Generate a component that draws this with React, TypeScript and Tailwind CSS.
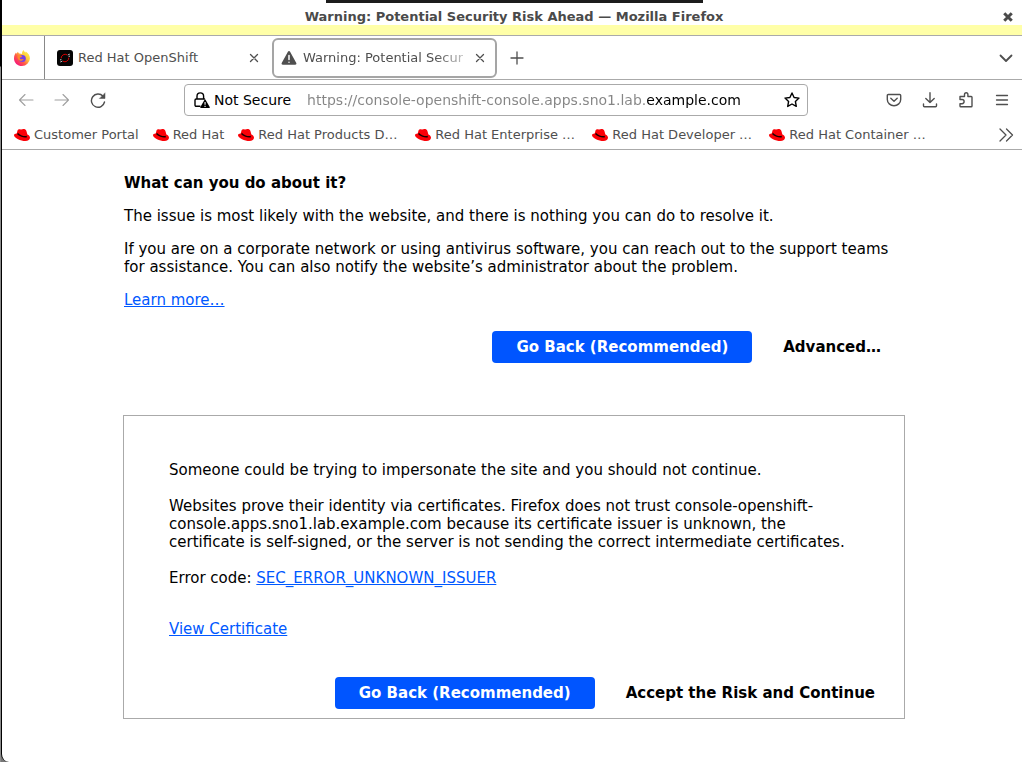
import React from "react";

const bookmarks = [
  { name: "Customer Portal", long: false },
  { name: "Red Hat", long: false },
  { name: "Red Hat Products D…", long: true },
  { name: "Red Hat Enterprise …", long: true },
  { name: "Red Hat Developer …", long: true },
  { name: "Red Hat Container …", long: true },
];

function Icon({ children, className = "size-4" }: { children: React.ReactNode; className?: string }) {
  return (
    <svg viewBox="0 0 16 16" className={className} fill="none" stroke="currentColor" strokeWidth="1.3" strokeLinecap="round" strokeLinejoin="round" aria-hidden="true">
      {children}
    </svg>
  );
}

function CloseIcon() {
  return (
    <Icon className="size-4">
      <path d="M4.500 4.500l7 7M11.500 4.500l-7 7" />
    </Icon>
  );
}

function RedHatIcon() {
  return (
    <svg viewBox="0 0 16 12" className="h-3 w-4 shrink-0" aria-hidden="true">
      <path fill="#fb0007" d="M3.600 1.300C4 .3 4.800 0 5.800.2L7 .6 8.500.2c1.700-.4 3.400.3 3.900 1.700l1 3.500c1.500.7 2.600 1.800 2.600 3.200 0 2-1.800 3.400-4.700 3.400C7 12 0 9 0 6.200 0 5 1 4.500 2.700 4.400z" />
      <path fill="none" stroke="#1a0000" strokeWidth="1.400" d="M3.500 4.500c1.600 2 6.200 3.900 9.300 3" />
    </svg>
  );
}

function FirefoxIcon() {
  return (
    <svg viewBox="0 0 16 16" className="size-4" aria-hidden="true">
      <defs>
        <linearGradient id="flame" x1="0.9" y1="0.1" x2="0.15" y2="0.9">
          <stop offset="0" stopColor="#fff44f" />
          <stop offset="0.35" stopColor="#ffc83a" />
          <stop offset="0.65" stopColor="#ff5a46" />
          <stop offset="1" stopColor="#f5157c" />
        </linearGradient>
      </defs>
      <path fill="url(#flame)" d="M9.500 0c.4 1.300 1.200 1.900 2.100 2.600l.2-1.100c2.500 1.700 4.200 4.200 4.100 7A8 8 0 0 1 8 16C3.500 16 0 12.700 0 8.400 0 6 .9 4 2 2.600l.3 1.200L4 1.800c.1.800.5 1.400 1.100 1.800 1.200.1 2.200.1 3 .7C7.900 2.600 8.300 1.100 9.500 0z" />
      <circle cx="8.300" cy="8.600" r="3.500" fill="#7542e5" />
      <path fill="#ff8a2a" d="M3.400 5.800c1.700-.8 3.700-.4 4.800.6-.5.800-1.700 1-2.300 1.200-.4.600.2 1.500 1 1.700 1.100.3 1.700-.5 2.800-.2-.5 1.400-2.200 2.100-3.700 1.600-1.700-.6-2.900-2.700-2.600-4.900z" />
    </svg>
  );
}

function OpenShiftIcon() {
  return (
    <svg viewBox="0 0 16 16" className="size-4 shrink-0" aria-hidden="true">
      <rect width="16" height="16" rx="3" fill="#050505" />
      <g fill="none" strokeWidth="1">
        <path stroke="#d00" d="M4.200 8.200A3.900 3.900 0 0 1 10.200 4.900M5.900 11.200a3.900 3.900 0 0 0 5.900-3.500" />
        <path stroke="#c8c8c8" d="M10.800 5l2-.9M11.600 6.600l1.400-.6M3 10l1.400-.6M3.300 12l2-.9" />
      </g>
    </svg>
  );
}

function WarningIcon() {
  return (
    <svg viewBox="0 0 16 16" className="size-4 shrink-0" aria-hidden="true">
      <path fill="#4f4f4f" d="M6.900 1.700a1.250 1.250 0 0 1 2.200 0l6.200 11.400c.4.800-.1 1.700-1.100 1.700H1.800c-1 0-1.500-.9-1.100-1.700z" />
      <path stroke="#fff" strokeWidth="1.500" strokeLinecap="round" d="M8 5.500v4M8 12.200v.1" />
    </svg>
  );
}

function InsecureLockIcon() {
  return (
    <svg viewBox="0 0 16 16" className="size-4 shrink-0" aria-hidden="true">
      <path fill="none" stroke="#000" strokeWidth="1.400" strokeLinejoin="round" strokeLinecap="round" d="M3 7V4.200a3.300 3.300 0 0 1 6.600 0V7M6 14.300H2.200c-.7 0-1.200-.5-1.200-1.200V8.200C1 7.500 1.500 7 2.200 7h8.300" />
      <path fill="#000" d="M10.400 7.900c.3-.6 1-.6 1.300 0l4 7c.3.600 0 1.100-.6 1.100H7c-.6 0-.9-.5-.6-1.100z" />
      <path stroke="#fff" strokeWidth="1.100" d="M11.050 10v2.800M11.050 13.700v1.200" />
    </svg>
  );
}

const primary = "h-8 cursor-pointer rounded bg-[#0055ff] px-6 font-bold text-white";
const plain = "h-8 cursor-pointer px-6 font-bold text-black";
const link = "text-[#0058ff] underline";

export default function App() {
  return (
    <div className="flex min-h-screen bg-[#777] font-['DejaVu_Sans',sans-serif] text-[15px] leading-[18px] text-black">
      <div className="w-px shrink-0 bg-[linear-gradient(to_bottom,#000_66px,#8c8c8c_67px)]" />
      <div className="flex min-w-0 flex-1 flex-col overflow-hidden rounded-bl-lg border-l border-black bg-white">
        <div className="flex h-[3px] shrink-0 justify-center pl-1">
          <div className="w-[377px] bg-[#1c1c1c]" />
        </div>
        <header className="grid h-[22px] shrink-0 grid-cols-[1fr_auto_1fr] items-center pt-[6px] pr-2 pl-3 text-[13px] leading-4 font-bold text-[#4a4a4a]">
          <h1 className="col-start-2">Warning: Potential Security Risk Ahead — Mozilla Firefox</h1>
          <button aria-label="Close window" className="justify-self-end">
            <Icon className="size-3">
              <path d="M3 3l10 10M13 3L3 13" strokeWidth="4" strokeLinecap="butt" />
            </Icon>
          </button>
        </header>
        <div className="h-[11px] shrink-0 border-b border-[#aaa] bg-[#ffffa8]" />

        <nav aria-label="Tabs" className="flex h-11 shrink-0 items-center border-b border-[#aaa] text-[13px] text-[#4f4f4f]">
          <button aria-label="Firefox View" className="flex h-full w-[43px] items-center justify-center border-r border-[#888] pr-[2px]">
            <FirefoxIcon />
          </button>
          <div className="flex w-[227px] items-center pr-[10px] pl-3">
            <button className="flex flex-1 items-center gap-[5px]">
              <OpenShiftIcon />
              Red Hat OpenShift
            </button>
            <button aria-label="Close Red Hat OpenShift"><CloseIcon /></button>
          </div>
          <div className="flex h-10 w-[225px] items-center rounded-md border-2 border-[#a5a5a5] px-[7px]">
            <button className="flex min-w-0 flex-1 items-center gap-[6px]">
              <WarningIcon />
              <span className="whitespace-nowrap [mask-image:linear-gradient(to_right,#000_82%,rgba(0,0,0,0.35))]">Warning: Potential Secur</span>
            </button>
            <button aria-label="Close current tab" className="shrink-0"><CloseIcon /></button>
          </div>
          <button aria-label="New tab" className="ml-3">
            <Icon><path d="M8 2v12M2 8h12" /></Icon>
          </button>
          <button aria-label="List all tabs" className="mr-2 ml-auto">
            <Icon><path d="M2.500 5.500L8 11l5.500-5.500" strokeWidth="1.800" /></Icon>
          </button>
        </nav>

        <div className="flex h-10 shrink-0 items-center text-[#4f4f4f]">
          <div className="flex w-[182px] shrink-0 items-center gap-5 pl-4">
            <button aria-label="Back" disabled className="text-[#a0a0a0]">
              <Icon><path d="M15 8H1.500M7 2.500L1.500 8 7 13.500" strokeWidth="1.100" /></Icon>
            </button>
            <button aria-label="Forward" disabled className="text-[#a0a0a0]">
              <Icon><path d="M1 8h13.500M9 2.500L14.500 8 9 13.500" strokeWidth="1.100" /></Icon>
            </button>
            <button aria-label="Reload">
              <Icon><path d="M14.500 10A6.600 6.600 0 1 1 13 4.300" strokeWidth="1.400" /><path d="M15 1.200v5.300H9.700z" fill="currentColor" strokeWidth="0.500" /></Icon>
            </button>
          </div>
          <div className="flex h-8 min-w-0 flex-1 items-center rounded border border-[#aaa] pr-[7px] pl-[9px] text-[14px] text-black">
            <button className="flex shrink-0 items-center gap-1">
              <InsecureLockIcon />
              Not Secure
            </button>
            <input
              aria-label="Address"
              defaultValue="https://console-openshift-console.apps.sno1.lab.example.com"
              className="ml-4 min-w-0 flex-1 bg-[linear-gradient(to_right,#858585_339px,#000_339px)] bg-clip-text text-transparent caret-black outline-none"
            />
            <button aria-label="Bookmark this page" className="shrink-0">
              <Icon><path d="M8 1l2.100 4.500 4.900.6-3.600 3.400.9 4.900L8 12l-4.300 2.400.9-4.900L1 6.100l4.900-.6z" strokeWidth="1.400" /></Icon>
            </button>
          </div>
          <div className="flex w-[214px] shrink-0 items-center justify-end gap-5 pr-3">
            <button aria-label="Save to Pocket">
              <Icon><path d="M2.300 2.500h11.400c.6 0 1 .4 1 1V7.500a6.700 6.200 0 0 1-13.400 0V3.500c0-.6.4-1 1-1zM4.800 6.300L8 9.300l3.200-3" strokeWidth="1.400" /></Icon>
            </button>
            <button aria-label="Downloads">
              <Icon><path d="M8 .8v9.700M3.800 6.500L8 10.500l4.200-4M1.500 12v1.800c0 .5.400.9.900.9h11.200c.5 0 .9-.4.9-.9V12" strokeWidth="1.400" /></Icon>
            </button>
            <button aria-label="Extensions">
              <Icon><path d="M2 7.500V4.500h4.500V2.600a1.700 1.900 0 0 1 3.400 0v1.900h3.300c.4 0 .8.400.8.800v8.600c0 .4-.4.800-.8.800H2.800c-.4 0-.8-.4-.8-.8v-2.200h2a2 2 0 0 0 0-4.200z" strokeWidth="1.400" /></Icon>
            </button>
            <button aria-label="Menu">
              <Icon><path d="M2.500 3.500h11M2.500 8h11M2.500 12.500h11" strokeWidth="1.300" /></Icon>
            </button>
          </div>
        </div>

        <nav aria-label="Bookmarks" className="flex h-[30px] shrink-0 items-center gap-[14px] border-b border-[#aaa] pr-2 pl-3 text-[13px] text-[#4f4f4f]">
          {bookmarks.map(({ name, long }) => (
            <a key={name} href="#" className={`flex items-center gap-1 whitespace-nowrap ${long ? "w-[163px]" : ""}`}>
              <RedHatIcon />
              {name}
            </a>
          ))}
          <button aria-label="More bookmarks" className="ml-auto">
            <Icon><path d="M2 2l6 6-6 6M8.500 2l6 6-6 6" /></Icon>
          </button>
        </nav>

        <div className="flex flex-1 pl-1">
          <main className="mx-auto flex w-full max-w-[782px] flex-col pt-6">
            <section className="flex flex-col gap-[15px] px-px">
              <h2 className="font-bold">What can you do about it?</h2>
              <p>The issue is most likely with the website, and there is nothing you can do to resolve it.</p>
              <p>
                If you are on a corporate network or using antivirus software, you can reach out to the support teams for
                assistance. You can also notify the website’s administrator about the problem.
              </p>
              <p><a href="#" className={link}>Learn more…</a></p>
            </section>
            <div className="mt-[22px] flex justify-end gap-[7px]">
              <button className={primary}>Go Back (Recommended)</button>
              <button className={plain}>Advanced…</button>
            </div>

            <section className="mt-[52px] flex flex-col border border-[#aaa] px-[45px] pt-[45px] pb-[9px]">
              <div className="flex flex-col gap-[18px]">
                <p>Someone could be trying to impersonate the site and you should not continue.</p>
                <p>
                  Websites prove their identity via certificates. Firefox does not trust console-openshift-console.apps.sno1.lab.example.com
                  because its certificate issuer is unknown, the certificate is self-signed, or the server is not sending the
                  correct intermediate certificates.
                </p>
                <p>Error code: <a href="#" className={link}>SEC_ERROR_UNKNOWN_ISSUER</a></p>
              </div>
              <p className="mt-[33px]"><a href="#" className={link}>View Certificate</a></p>
              <div className="-mr-10 mt-[39px] flex justify-end gap-[7px]">
                <button className={primary}>Go Back (Recommended)</button>
                <button className={plain}>Accept the Risk and Continue</button>
              </div>
            </section>
          </main>
        </div>
      </div>
    </div>
  );
}
